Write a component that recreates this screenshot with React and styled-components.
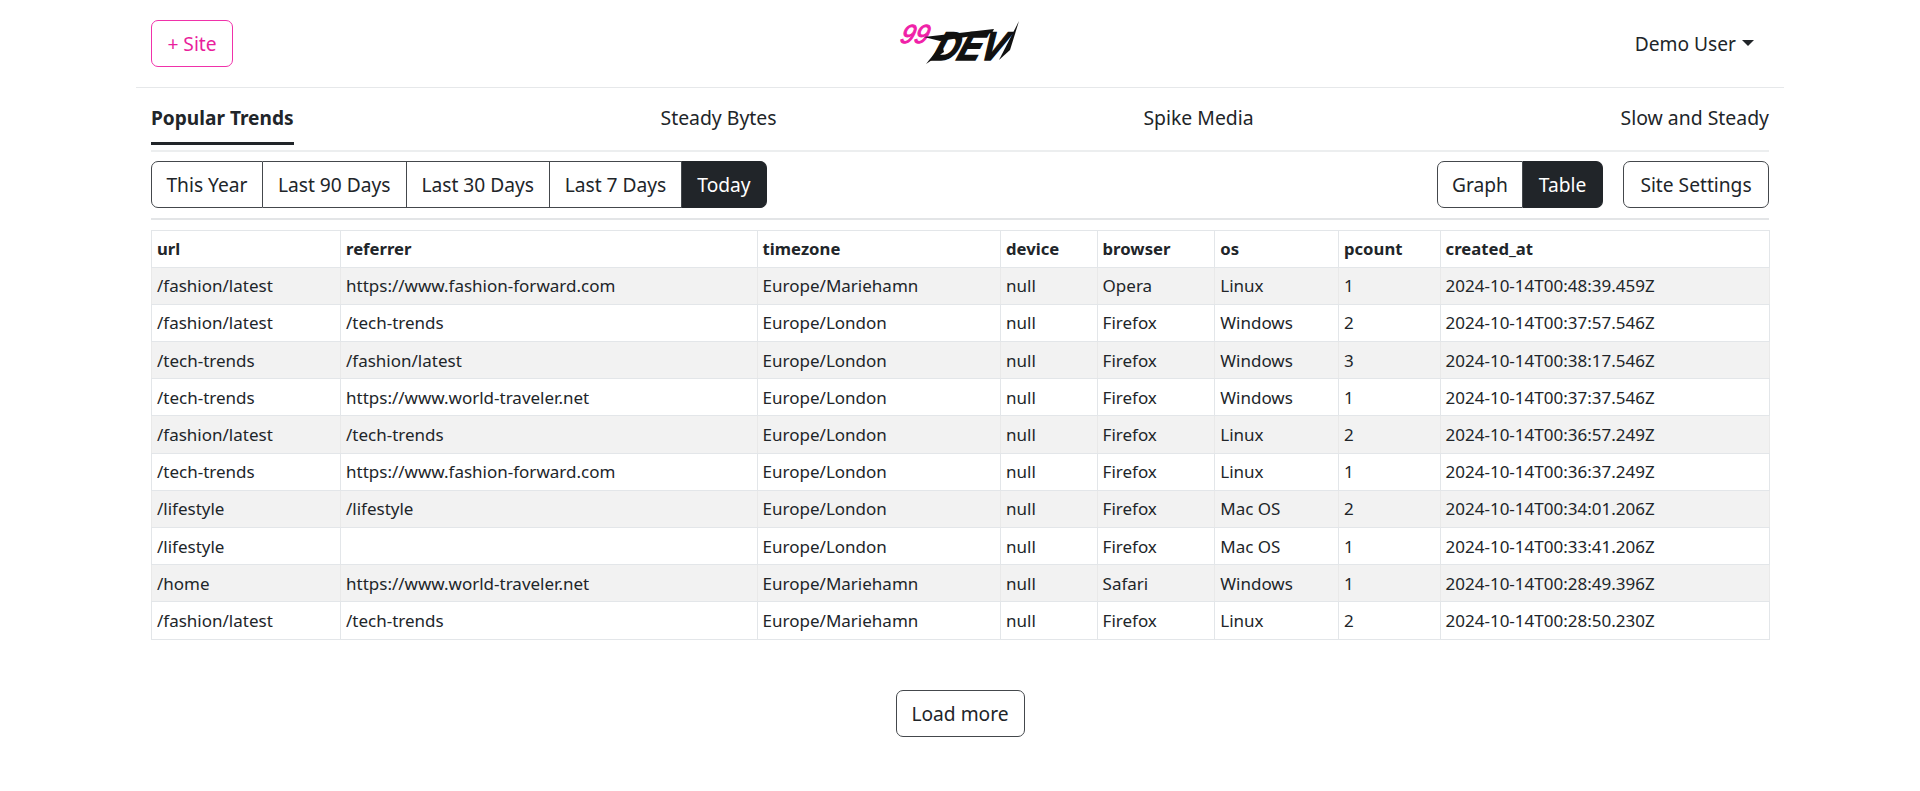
import React from "react";
import styled, { createGlobalStyle } from "styled-components";

const Global = createGlobalStyle`
  html, body { margin: 0; padding: 0; background: #fff; }
  body {
    font-family: "Noto Sans", "Open Sans", sans-serif;
    color: #212529;
    font-size: 19.2px;
  }
  * { box-sizing: border-box; }
`;

const Page = styled.div`
  width: 1648px;
  margin: 0 auto;
  padding-bottom: 54px;
`;

const Header = styled.header`
  height: 87.5px;
  padding: 1px 15px 0;
  display: grid;
  grid-template-columns: 1fr auto 1fr;
  align-items: center;
  border-bottom: 1px solid #e6e8ea;
`;

const AddSite = styled.button`
  justify-self: start;
  width: 82px;
  height: 47px;
  background: #fff;
  color: #e91e9c;
  border: 1px solid #f032aa;
  border-radius: 7px;
  font: inherit;
`;

const Logo = styled.svg`
  display: block;
  width: 140px;
  height: 46px;
  margin: -1px -16px 0 -4px;
  overflow: visible;
`;

const UserMenu = styled.div`
  justify-self: end;
  display: flex;
  align-items: center;
  gap: 6px;
  padding-right: 15px;
`;

const Caret = styled.span`
  border-top: 6px solid #212529;
  border-left: 6px solid transparent;
  border-right: 6px solid transparent;
  margin-top: -2px;
`;

const Section = styled.div`
  padding: 0 15px;
`;

const Tabs = styled.nav`
  display: flex;
  justify-content: space-between;
  height: 64px;
  border-bottom: 2px solid #eceeef;
`;

const Tab = styled.div`
  padding-top: 16px;
  font-size: 19.4px;
  height: ${(p) => (p.$active ? "57px" : "auto")};
  ${(p) => p.$active && "padding-top: 17px; font-size: 19.1px; font-weight: 700; border-bottom: 3px solid #212529;"}
`;

const Toolbar = styled.div`
  display: flex;
  align-items: center;
  justify-content: space-between;
  height: 68px;
  border-bottom: 2px solid #e3e5e7;
`;

const RightTools = styled.div`
  display: flex;
  gap: 20px;
`;

const Group = styled.div`
  display: flex;
`;

const Btn = styled.button`
  height: 47px;
  width: ${(p) => p.$w}px;
  padding: 0;
  font: inherit;
  color: ${(p) => (p.$on ? "#fff" : "#212529")};
  background: ${(p) => (p.$on ? "#212529" : "#fff")};
  border: 1px solid ${(p) => (p.$on ? "#212529" : "#44484c")};
  border-left-width: ${(p) => (p.$first ? 1 : 0)}px;
  border-radius: ${(p) =>
    p.$first && p.$last ? "7px" : p.$first ? "7px 0 0 7px" : p.$last ? "0 7px 7px 0" : "0"};
`;

const LoadRow = styled.div`
  display: flex;
  justify-content: center;
  margin-top: 50px;
`;

const Table = styled.table`
  width: 100%;
  margin-top: 10px;
  border-collapse: collapse;
  table-layout: fixed;
  font-size: 17px;
`;

const Cell = styled.td`
  height: 37.2px;
  padding: 0 5px;
  border: 1px solid #e3e6e9;
  white-space: nowrap;
  background: ${(p) => (p.$striped ? "#f2f2f2" : "#fff")};
  ${(p) => p.$striped && "border-left-color: #e9e9e9; border-right-color: #e9e9e9;"}
`;

const Head = styled.th`
  height: 37.2px;
  padding: 0 5px;
  border: 1px solid #e3e6e9;
  text-align: left;
  font-size: 16.7px;
  font-weight: 700;
  white-space: nowrap;
`;

const columns = [
  ["url", 189],
  ["referrer", 416.6],
  ["timezone", 243.4],
  ["device", 96.6],
  ["browser", 117.7],
  ["os", 123.7],
  ["pcount", 101.6],
  ["created_at", 329.8],
];

const rows = [
  ["/fashion/latest", "https://www.fashion-forward.com", "Europe/Mariehamn", "null", "Opera", "Linux", "1", "2024-10-14T00:48:39.459Z"],
  ["/fashion/latest", "/tech-trends", "Europe/London", "null", "Firefox", "Windows", "2", "2024-10-14T00:37:57.546Z"],
  ["/tech-trends", "/fashion/latest", "Europe/London", "null", "Firefox", "Windows", "3", "2024-10-14T00:38:17.546Z"],
  ["/tech-trends", "https://www.world-traveler.net", "Europe/London", "null", "Firefox", "Windows", "1", "2024-10-14T00:37:37.546Z"],
  ["/fashion/latest", "/tech-trends", "Europe/London", "null", "Firefox", "Linux", "2", "2024-10-14T00:36:57.249Z"],
  ["/tech-trends", "https://www.fashion-forward.com", "Europe/London", "null", "Firefox", "Linux", "1", "2024-10-14T00:36:37.249Z"],
  ["/lifestyle", "/lifestyle", "Europe/London", "null", "Firefox", "Mac OS", "2", "2024-10-14T00:34:01.206Z"],
  ["/lifestyle", "", "Europe/London", "null", "Firefox", "Mac OS", "1", "2024-10-14T00:33:41.206Z"],
  ["/home", "https://www.world-traveler.net", "Europe/Mariehamn", "null", "Safari", "Windows", "1", "2024-10-14T00:28:49.396Z"],
  ["/fashion/latest", "/tech-trends", "Europe/Mariehamn", "null", "Firefox", "Linux", "2", "2024-10-14T00:28:50.230Z"],
];

const ranges = [
  ["This Year", 112],
  ["Last 90 Days", 143.5],
  ["Last 30 Days", 143.5],
  ["Last 7 Days", 132],
  ["Today", 85],
];

function BrandLogo() {
  return (
    <Logo viewBox="0 0 140 46">
      <text
        transform="translate(3 23) skewX(-16)"
        fontFamily="Liberation Sans"
        fontStyle="italic"
        fontSize="26"
        fill="#f01fa8"
        stroke="#f01fa8"
        strokeWidth="1"
        textLength="28"
        lengthAdjust="spacingAndGlyphs"
      >
        99
      </text>
      <text
        transform="translate(35 40) skewX(-20)"
        fontFamily="Liberation Sans"
        fontWeight="700"
        fontStyle="italic"
        fontSize="40"
        fill="#111"
        stroke="#111"
        strokeWidth="1.6"
        textLength="70"
        lengthAdjust="spacingAndGlyphs"
      >
        DEV
      </text>
      {/* brush tails */}
      <polygon points="28,17 98,9 96,13 44,21" fill="#111" />
      <polygon points="103,40 123,1 114,30" fill="#111" />
      <polygon points="30,44 46,24 48,32" fill="#111" />
    </Logo>
  );
}

export default function App() {
  return (
    <Page>
      <Global />
      <Header>
        <AddSite>+ Site</AddSite>
        <BrandLogo />
        <UserMenu>
          Demo User <Caret />
        </UserMenu>
      </Header>
      <Section>
        <Tabs>
          <Tab $active>Popular Trends</Tab>
          <Tab>Steady Bytes</Tab>
          <Tab>Spike Media</Tab>
          <Tab>Slow and Steady</Tab>
        </Tabs>
        <Toolbar>
          <Group>
            {ranges.map(([label, w], i) => (
              <Btn key={label} $w={w} $first={i === 0} $last={i === ranges.length - 1} $on={label === "Today"}>
                {label}
              </Btn>
            ))}
          </Group>
          <RightTools>
            <Group>
              <Btn $w={86} $first>Graph</Btn>
              <Btn $w={80} $last $on>Table</Btn>
            </Group>
            <Btn $w={146} $first $last>Site Settings</Btn>
          </RightTools>
        </Toolbar>
        <Table>
          <colgroup>
            {columns.map(([name, w]) => (
              <col key={name} width={w} />
            ))}
          </colgroup>
          <thead>
            <tr>
              {columns.map(([name]) => (
                <Head key={name}>{name}</Head>
              ))}
            </tr>
          </thead>
          <tbody>
            {rows.map((row, r) => (
              <tr key={r}>
                {row.map((value, c) => (
                  <Cell key={c} $striped={r % 2 === 0}>{value}</Cell>
                ))}
              </tr>
            ))}
          </tbody>
        </Table>
        <LoadRow>
          <Btn $w={129} $first $last>Load more</Btn>
        </LoadRow>
      </Section>
    </Page>
  );
}
